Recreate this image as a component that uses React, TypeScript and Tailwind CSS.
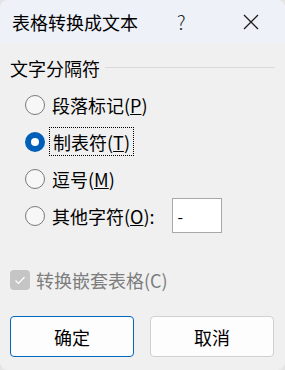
import React from "react";

const font = { fontFamily: '"Noto Sans CJK SC", "Noto Sans", sans-serif' };

function Radio({ checked }: { checked?: boolean }) {
  if (checked) {
    return (
      <div className="w-[20px] h-[20px] rounded-full bg-[#005fb8] flex items-center justify-center shrink-0">
        <div className="w-[8px] h-[8px] rounded-full bg-white" />
      </div>
    );
  }
  return <div className="w-[20px] h-[20px] rounded-full border border-[#7a7a7a] bg-[#f7f7f7] shrink-0" />;
}

function Row({ children, checked, focused }: { children: React.ReactNode; checked?: boolean; focused?: boolean }) {
  return (
    <div className="h-[37px] flex items-center">
      <Radio checked={checked} />
      <div
        className={
          focused
            ? "ml-[4px] h-[29px] px-[3px] flex items-center border border-dotted border-black text-[18px] leading-none text-black"
            : "ml-[7px] flex items-center text-[18px] leading-none text-black"
        }
      >
        {children}
      </div>
    </div>
  );
}

export default function App() {
  return (
    <div className="w-[285px] h-[370px] bg-[#e4e4e4]" style={font}>
      <div className="w-full h-full rounded-[8px] overflow-hidden flex flex-col bg-[#f0f0f0]">
        <div className="h-[43px] bg-[#eef1f8] flex items-center pl-[12px] shrink-0">
          <span className="text-[18px] leading-none text-black">表格转换成文本</span>
          <span className="ml-[39px] text-[19px] leading-none text-[#222]" style={{ fontWeight: 300 }}>?</span>
          <svg className="ml-[57px]" width="16" height="16" viewBox="0 0 16 16">
            <path d="M1 1 L15 15 M15 1 L1 15" stroke="#1a1a1a" strokeWidth="1.3" fill="none" />
          </svg>
        </div>
        <div className="flex-1 flex flex-col pl-[10px] pr-[10px]">
          <div className="mt-[16px] h-[18px] flex items-center">
            <span className="text-[18px] leading-none text-black">文字分隔符</span>
            <div className="flex-1 ml-[5px] h-px bg-[#d9d9d9] mt-[-2px]" />
          </div>
          <div className="mt-[9px] ml-[15px] flex flex-col">
            <Row>
              段落标记(<u>P</u>)
            </Row>
            <Row checked focused>
              制表符(<u>T</u>)
            </Row>
            <Row>
              逗号(<u>M</u>)
            </Row>
            <Row>
              <span>其他字符(<u>O</u>):</span>
              <div className="ml-[17px] w-[50px] h-[35px] bg-white border border-[#a8a8a8] flex items-center pl-[5px] text-[16px] leading-none">
                -
              </div>
            </Row>
          </div>
          <div className="mt-[36px] h-[20px] flex items-center">
            <div className="w-[20px] h-[20px] rounded-[4px] bg-[#c5c5c5] flex items-center justify-center">
              <svg width="12" height="12" viewBox="0 0 12 12">
                <path d="M1.5 6.5 L4.5 9.5 L10.5 3" stroke="white" strokeWidth="1.2" fill="none" />
              </svg>
            </div>
            <span className="ml-[6px] text-[18px] leading-none text-[#7d7d7d]">转换嵌套表格(C)</span>
          </div>
          <div className="mt-[26px] flex gap-[16px]">
            <button className="w-[124px] h-[41px] rounded-[4px] border border-[#0067c0] bg-[#fdfdfd] text-[18px] leading-none text-black flex items-center justify-center">
              确定
            </button>
            <button className="w-[124px] h-[41px] rounded-[4px] border border-[#d0d0d0] bg-[#fdfdfd] text-[18px] leading-none text-black flex items-center justify-center">
              取消
            </button>
          </div>
        </div>
      </div>
    </div>
  );
}
